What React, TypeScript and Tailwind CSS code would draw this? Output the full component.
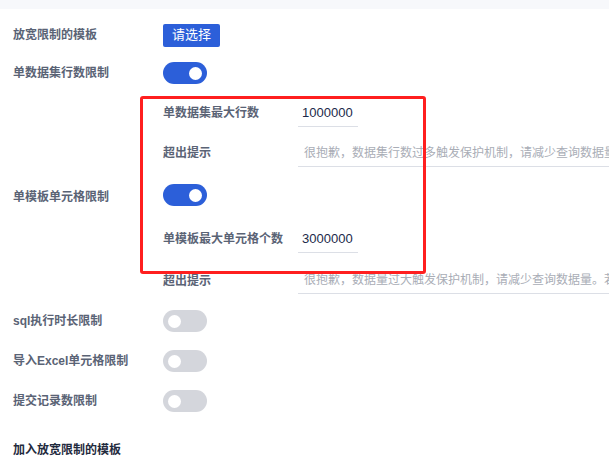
import React from "react";

function Toggle({ on }: { on: boolean }) {
  return (
    <div
      className={`flex h-[22px] w-[44px] items-center rounded-full px-[5px] ${
        on ? "justify-end bg-[#2c5fd9]" : "justify-start bg-[#d4d6dc]"
      }`}
    >
      <div className="h-[13px] w-[13px] rounded-full bg-white" />
    </div>
  );
}

function Label({ children }: { children: React.ReactNode }) {
  return <div className="text-[12px] font-semibold text-[#5a6375]">{children}</div>;
}

function Row({ label, h, children }: { label: string; h: string; children: React.ReactNode }) {
  return (
    <div className={`flex items-center ${h}`}>
      <div className="w-[150px] shrink-0">
        <Label>{label}</Label>
      </div>
      {children}
    </div>
  );
}

function SubRow({ label, h, children }: { label?: string; h: string; children: React.ReactNode }) {
  return (
    <div className={`flex items-center ${h}`}>
      {label ? (
        <div className="w-[135px] shrink-0">
          <Label>{label}</Label>
        </div>
      ) : null}
      {children}
    </div>
  );
}

function NumberInput({ value }: { value: string }) {
  return (
    <div className="flex h-[27px] w-[60px] items-center border-b border-[#dcdfe6] pl-[4px] text-[13px] text-[#1c2a4a]">
      {value}
    </div>
  );
}

function HintInput({ text }: { text: string }) {
  return (
    <div className="flex h-[27px] min-w-0 flex-1 items-center overflow-hidden whitespace-nowrap border-b border-[#dcdfe6] pl-[6px] text-[12px] text-[#a9adb6]">
      {text}
    </div>
  );
}

export default function App() {
  return (
    <div
      className="relative h-[457px] w-[609px] overflow-hidden bg-white"
      style={{ fontFamily: '"Liberation Sans", "Noto Sans CJK SC", sans-serif' }}
    >
      <div className="h-[9px] bg-[#f7f8fb]" />
      <div className="pl-[13px] pt-[7px]">
        <Row label="放宽限制的模板" h="h-[38px]">
          <button className="flex h-[23px] w-[57px] items-center justify-center rounded-[2px] bg-[#2c5fd9] text-[13px] text-white">
            请选择
          </button>
        </Row>
        <Row label="单数据集行数限制" h="h-[38px]">
          <Toggle on />
        </Row>

        <div className="flex items-center">
          <div className="w-[150px] shrink-0">
            <Label>单模板单元格限制</Label>
          </div>
          <div className="flex min-w-0 flex-1 flex-col">
            <SubRow label="单数据集最大行数" h="h-[42px]">
              <NumberInput value="1000000" />
            </SubRow>
            <SubRow label="超出提示" h="h-[38px]">
              <HintInput text="很抱歉，数据集行数过多触发保护机制，请减少查询数据量。若需要更多数据请联系管理员" />
            </SubRow>
            <SubRow h="h-[46px]">
              <Toggle on />
            </SubRow>
            <SubRow label="单模板最大单元格个数" h="h-[42px]">
              <NumberInput value="3000000" />
            </SubRow>
            <SubRow label="超出提示" h="h-[41px]">
              <HintInput text="很抱歉，数据量过大触发保护机制，请减少查询数据量。若需要更多数据请联系管理员" />
            </SubRow>
          </div>
        </div>

        <Row label="sql执行时长限制" h="h-[40px]">
          <Toggle on={false} />
        </Row>
        <Row label="导入Excel单元格限制" h="h-[40px]">
          <Toggle on={false} />
        </Row>
        <Row label="提交记录数限制" h="h-[40px]">
          <Toggle on={false} />
        </Row>

        <div className="mt-[20px] text-[12px] font-semibold text-[#1f2a3d]">加入放宽限制的模板</div>
      </div>

      {/* annotation box drawn over the form */}
      <div className="pointer-events-none absolute left-[140px] top-[96px] h-[178px] w-[286px] rounded-[3px] border-[3px] border-[#ff1f1f]" />
    </div>
  );
}
